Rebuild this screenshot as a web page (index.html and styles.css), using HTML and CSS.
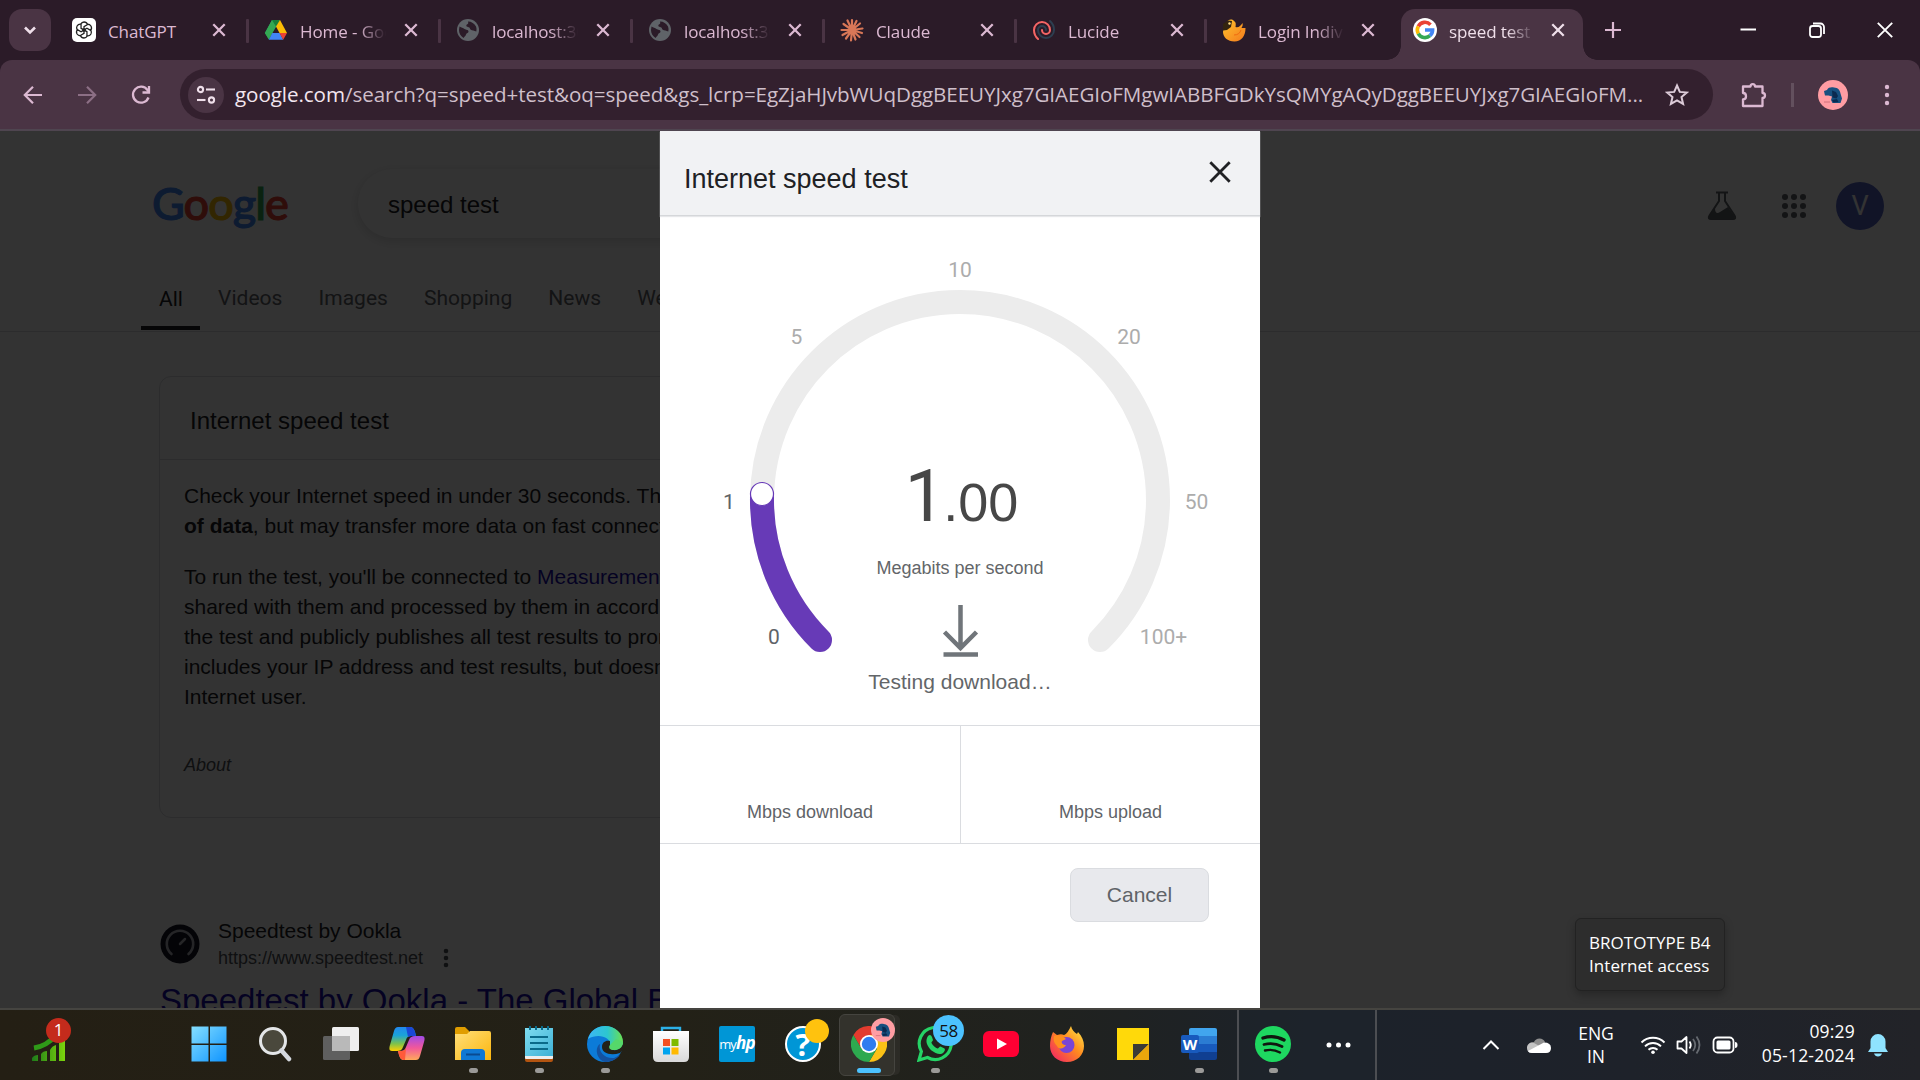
FILE: index.html
```html
<!DOCTYPE html>
<html lang="en">
<head>
<meta charset="utf-8">
<title>speed test - Google Search</title>
<link rel="stylesheet" href="styles.css">
</head>
<body>
<svg width="0" height="0" class="defs">
  <defs>
    <symbol id="x" viewBox="0 0 14 14"><path d="M2 2l10 10M12 2L2 12" stroke="currentColor" stroke-width="2" fill="none"/></symbol>
    <symbol id="globe" viewBox="0 0 24 24"><circle cx="12" cy="12" r="11" fill="#5f6368"/><path d="M3.500 8.500c2 1.500 3.500 1 5 2.500 1.500 1 4 .5 4 2.500 0 1.500-2 1.500-2.500 3-.3 1.500-1.500 2-2.500 3.500C4.500 18 3 15 3 12zM12 3.500c3.500 0 6.500 2 8 5 .8 2 .5 3.500.3 5l-3-1c-2 0-3.500-1-3.500-2.500 0-1.200-3.500-.5-3.500-2.500 0-1.500 2-1 2-2.500z" fill="#2b1b28"/></symbol>
    <symbol id="dog" viewBox="0 0 30 30"><circle cx="15" cy="15" r="15" fill="#ff9da3"/><path d="M6 11l3-1c1-2.500 4-3 7-2.500 4 .3 6 2.500 6.500 6l1.500 5-1.500 4.500h-8l-1.500-3 1-3.500-3.500-1H7l-.5-2z" fill="#17507f"/><path d="M14 10.500l4 1.500 2 4-1.500 2.500-4-1zM14 20l5-1 1.500 3-5 .5z" fill="#0b2a50"/><path d="M6 22h6" stroke="#d0707b"/></symbol>
    <linearGradient id="gWin" x1="0" y1="0" x2="1" y2="1"><stop offset="0" stop-color="#85dfff"/><stop offset="1" stop-color="#0f94ff"/></linearGradient>
    <linearGradient id="gFold" x1="0" y1="0" x2="1" y2="1"><stop offset="0" stop-color="#ffdf7a"/><stop offset="1" stop-color="#fcb60d"/></linearGradient>
    <linearGradient id="gNote" x1="0" y1="0" x2="1" y2="1"><stop offset="0" stop-color="#7fdcf0"/><stop offset="1" stop-color="#3eb1d6"/></linearGradient>
    <linearGradient id="gEdge" x1="0" y1="0" x2="1" y2="0"><stop offset="0" stop-color="#3db7f5"/><stop offset=".55" stop-color="#2cc6d0"/><stop offset="1" stop-color="#6be04e"/></linearGradient>
    <linearGradient id="gStore" x1="0" y1="0" x2="0" y2="1"><stop offset="0" stop-color="#fff"/><stop offset="1" stop-color="#d9d9d9"/></linearGradient>
    <linearGradient id="gBars" x1="0" y1="0" x2="1" y2="0"><stop offset="0" stop-color="#1e7a1a"/><stop offset="1" stop-color="#7bd40c"/></linearGradient>
    <linearGradient id="gCopA" x1="0" y1="0" x2="0" y2="1"><stop offset="0" stop-color="#2288ef"/><stop offset=".35" stop-color="#1aa3d8"/><stop offset=".7" stop-color="#7fc24a"/><stop offset="1" stop-color="#ffd000"/></linearGradient>
    <linearGradient id="gCopB" x1="0" y1="0" x2="0" y2="1"><stop offset="0" stop-color="#a14be8"/><stop offset=".5" stop-color="#f2589a"/><stop offset="1" stop-color="#ffa95a"/></linearGradient>
    <linearGradient id="gFox" x1="1" y1="0" x2="0" y2="1"><stop offset="0" stop-color="#fff14a"/><stop offset=".45" stop-color="#ff8a1f"/><stop offset="1" stop-color="#f0186c"/></linearGradient>
    <linearGradient id="gBird" x1="0" y1="0" x2="1" y2="1"><stop offset="0" stop-color="#ffc32e"/><stop offset="1" stop-color="#f47a1c"/></linearGradient>
  </defs>
</svg>

<div class="screen">
  <header class="tabstrip">
    <button class="tab-search"><svg width="16" height="16" viewBox="0 0 16 16"><path d="M3 5.500l5 5 5-5" stroke="#efdfea" stroke-width="2.600" fill="none"/></svg></button>
    <div class="tabs">
      <div class="tab"><svg class="fav" viewBox="0 0 24 24"><rect width="24" height="24" rx="5" fill="#fff"/><g fill="none" stroke="#222" stroke-width="1.300"><path id="petal" d="M12 4a3.800 3.800 0 0 1 3.600 2.500L12 8.600V14M8.800 6a3.800 3.800 0 0 1 3.200-2"/><use href="#petal" transform="rotate(60 12 12)"/><use href="#petal" transform="rotate(120 12 12)"/><use href="#petal" transform="rotate(180 12 12)"/><use href="#petal" transform="rotate(240 12 12)"/><use href="#petal" transform="rotate(300 12 12)"/></g></svg><span class="tt">ChatGPT</span><svg class="cls"><use href="#x"/></svg></div>
      <div class="tab"><svg class="fav" viewBox="0 0 24 24"><path d="M8 2h8L8.500 14.500 5 21.500.8 15z" fill="#1fa463"/><path d="M8 2l4 6.500L4.800 21.500 1 15z" fill="#34a853"/><path d="M8 2h8l-4 6.500z" fill="#188038"/><path d="M16 2l7 13h-7.500L12 8.500z" fill="#fbbc04"/><path d="M8.300 15h7.400l3.500 6.700H4.800z" fill="#4285f4"/><path d="M15.500 15H23l-3.800 6.700z" fill="#ea4335"/></svg><span class="tt">Home - Goo</span><svg class="cls"><use href="#x"/></svg></div>
      <div class="tab"><svg class="fav"><use href="#globe"/></svg><span class="tt">localhost:30</span><svg class="cls"><use href="#x"/></svg></div>
      <div class="tab"><svg class="fav"><use href="#globe"/></svg><span class="tt">localhost:30</span><svg class="cls"><use href="#x"/></svg></div>
      <div class="tab"><svg class="fav" viewBox="0 0 24 24"><g stroke="#d97757" stroke-width="2.200" stroke-linecap="round"><path d="M12 12V2M12 12l4.500-9M12 12l8-6.500M12 12l10.500-1.500M12 12l10 3M12 12l7.500 7M12 12l3.500 9.500M12 12l-1 10.500M12 12l-6 8.500M12 12l-9.500 5M12 12L1.500 12M12 12L3.500 6M12 12L7.500 2.500"/></g></svg><span class="tt">Claude</span><svg class="cls"><use href="#x"/></svg></div>
      <div class="tab sixth"><svg class="fav" viewBox="0 0 24 24" fill="none" stroke-width="2" stroke-linecap="round"><path d="M14 12a4 4 0 0 0-8 0 8 8 0 1 0 16 0 11.970 11.970 0 0 0-4-8.944" stroke="#2d3f50"/><path d="M10 12a4 4 0 0 0 8 0 8 8 0 1 0-16 0 11.970 11.970 0 0 0 4.063 9" stroke="#f56565"/></svg><span class="tt">Lucide</span><svg class="cls"><use href="#x"/></svg></div>
      <div class="tab last"><svg class="fav" viewBox="0 0 24 24"><path d="M5 4c2-3 5-3 7-1 2 1 2 3 1.500 6 3 1 5-1 7-4 .5 2 0 3.500-1 5h4c0 8-4 13.500-11 13.500S1 19 1 14c0-4 2-7 4-10z" fill="url(#gBird)"/><path d="M1 6l5-3.500 4 .5-1 6-4 3-4 .5z" fill="#33240f"/><circle cx="7.500" cy="5.500" r="1.200" fill="#ffe08a"/><path d="M12 17c4 0 6-2 7-5" stroke="#f06a10" fill="none"/></svg><span class="tt">Login Indivi</span><svg class="cls"><use href="#x"/></svg></div>
      <div class="tab active"><svg class="fav" viewBox="0 0 24 24"><circle cx="12" cy="12" r="12" fill="#fff"/><g fill="none" stroke-width="3.600"><path d="M5.300 8.300A7.600 7.600 0 0 1 17.500 6.700" stroke="#ea4335"/><path d="M5.300 15.700a7.600 7.600 0 0 1 0-7.400" stroke="#fbbc04"/><path d="M17 17.700A7.600 7.600 0 0 1 5.300 15.700" stroke="#34a853"/><path d="M12 12h7.600a7.600 7.600 0 0 1-2.600 5.700" stroke="#4285f4"/></g></svg><span class="tt">speed test</span><svg class="cls"><use href="#x"/></svg></div>
    </div>
    <button class="newtab"><svg width="18" height="18" viewBox="0 0 18 18"><path d="M9 1v16M1 9h16" stroke="#dcb9d2" stroke-width="2.200"/></svg></button>
    <div class="winbtns">
      <svg width="16" height="16" viewBox="0 0 16 16"><path d="M.5 7.500H16" stroke="#fff" stroke-width="2"/></svg>
      <svg width="16" height="16" viewBox="0 0 16 16" fill="none" stroke="#fff" stroke-width="1.800"><rect x="1" y="4" width="11" height="11" rx="2.500"/><path d="M4 1.500h7.500a3.500 3.500 0 0 1 3.500 3.500V12"/></svg>
      <svg width="16" height="16" viewBox="0 0 16 16"><path d="M.8.800l14.400 14.400M15.200.8L.8 15.200" stroke="#fff" stroke-width="1.900"/></svg>
    </div>
  </header>

  <nav class="toolbar">
    <div class="navbtns">
      <svg width="20" height="20" viewBox="0 0 20 20" fill="none" stroke="#dcb9d2" stroke-width="2.200"><path d="M19 10H2.500M10 1.800L1.800 10l8.200 8.200"/></svg>
      <svg width="20" height="20" viewBox="0 0 20 20" fill="none" stroke="#8c6f85" stroke-width="2.200"><path d="M1 10h16.500M10 1.800l8.200 8.200-8.200 8.200"/></svg>
      <svg width="20" height="20" viewBox="0 0 20 20" fill="none" stroke="#dcb9d2" stroke-width="2.300"><path d="M17.500 12.500A8 8 0 1 1 16.500 5l1.500 2"/><path d="M18 1v6.500h-6.500"/></svg>
    </div>
    <div class="omnibox">
      <span class="siteinfo"><svg width="20" height="20" viewBox="0 0 20 20" fill="none" stroke="#efdfea" stroke-width="2.100"><circle cx="4.500" cy="4.500" r="2.600"/><path d="M10 4.500h9"/><circle cx="15.500" cy="15" r="2.600"/><path d="M1 15h8.500"/></svg></span>
      <span class="url"><b>google.com</b>/search?q=speed+test&amp;oq=speed&amp;gs_lcrp=EgZjaHJvbWUqDggBEEUYJxg7GIAEGIoFMgwIABBFGDkYsQMYgAQyDggBEEUYJxg7GIAEGIoFM...</span>
      <svg class="star" width="24" height="24" viewBox="0 0 24 24" fill="none" stroke="#dccbd8" stroke-width="2"><path d="M12 2.500l2.800 6.400 7 .6-5.300 4.600 1.600 6.800L12 17.300l-6.100 3.600 1.600-6.800L2.200 9.500l7-.6z"/></svg>
    </div>
    <div class="tools">
      <svg class="puz" width="26" height="26" viewBox="0 0 26 26" fill="none" stroke="#dcb9d2" stroke-width="2.300" stroke-linejoin="round"><path d="M2 4.500h7.500c0-3.300 4.500-3.300 4.500 0h7.500v6.500c3.300 0 3.300 5 0 5v8H2v-6.500c4 0 4-6.500 0-6.500z"/></svg>
      <i class="tsep"></i>
      <svg class="ava" width="30" height="30"><use href="#dog"/></svg>
      <svg width="6" height="22" viewBox="0 0 6 22" fill="#dcb9d2"><circle cx="3" cy="3" r="2.200"/><circle cx="3" cy="11" r="2.200"/><circle cx="3" cy="19" r="2.200"/></svg>
    </div>
  </nav>

  <main class="page">
    <div class="ghead">
      <div class="logo"><span class="b">G</span><span class="r">o</span><span class="y">o</span><span class="b">g</span><span class="g">l</span><span class="r">e</span></div>
      <div class="searchbox">speed test</div>
      <div class="gright">
        <svg width="30" height="30" viewBox="0 0 30 30"><path d="M9 1.500h12M12 2v8L2.500 24.500C1 27 2 28 4 28h22c2 0 3-1 1.500-3.500L18 10V2" fill="none" stroke="#5f6368" stroke-width="2"/><path d="M3 24l5-7c0 5 2 6 5 4l8-5 7 10-2 2.500H4L2 27z" fill="#5f6368"/></svg>
        <svg width="24" height="24" viewBox="0 0 24 24" fill="#5f6368"><circle cx="3" cy="3" r="3"/><circle cx="12" cy="3" r="3"/><circle cx="21" cy="3" r="3"/><circle cx="3" cy="12" r="3"/><circle cx="12" cy="12" r="3"/><circle cx="21" cy="12" r="3"/><circle cx="3" cy="21" r="3"/><circle cx="12" cy="21" r="3"/><circle cx="21" cy="21" r="3"/></svg>
        <span class="user">V</span>
      </div>
    </div>
    <div class="gtabs"><span class="on">All</span><span>Videos</span><span>Images</span><span>Shopping</span><span>News</span><span>Web</span></div>
    <section class="card">
      <h2>Internet speed test</h2>
      <div class="cbody">
        <p>Check your Internet speed in under 30 seconds. The<br><b>of data</b>, but may transfer more data on fast connect</p>
        <p>To run the test, you'll be connected to <a>Measurement</a><br>shared with them and processed by them in accord<br>the test and publicly publishes all test results to prom<br>includes your IP address and test results, but doesn't<br>Internet user.</p>
        <p class="about">About</p>
      </div>
    </section>
    <section class="result">
      <div class="src">
        <svg width="40" height="40" viewBox="0 0 40 40"><circle cx="20" cy="20" r="19.500" fill="#141526"/><path d="M11.500 30a13.200 13.200 0 1 1 17 0" fill="none" stroke="#b9b9c0" stroke-width="2.600" stroke-linecap="round"/><path d="M20 20l5-5" stroke="#b9b9c0" stroke-width="2.500" stroke-linecap="round"/></svg>
        <div><div class="sname">Speedtest by Ookla</div><div class="surl">https://www.speedtest.net<svg width="6" height="20" viewBox="0 0 6 20" fill="#4d5156"><circle cx="3" cy="3" r="2.300"/><circle cx="3" cy="10" r="2.300"/><circle cx="3" cy="17" r="2.300"/></svg></div></div>
      </div>
      <h3>Speedtest by Ookla - The Global B</h3>
    </section>

    <div class="scrim">
      <div class="modal">
        <div class="mhead"><span>Internet speed test</span><svg width="24" height="24" viewBox="0 0 24 24"><path d="M2.300 2.300l19.400 19.400M21.700 2.300L2.300 21.700" stroke="#202124" stroke-width="2.800"/></svg></div>
        <svg class="gauge" width="600" height="510" viewBox="660 216 600 510">
          <g fill="none" stroke-width="24" stroke-linecap="round">
            <path d="M820 640A198 198 0 1 1 1100 640" stroke="#ececec"/>
            <path d="M820 640A198 198 0 0 1 762 497" stroke="#673ab7" />
          </g>
          <circle cx="762" cy="494" r="11.500" fill="#fff" stroke="#673ab7" stroke-width="1.200"/>
          <g class="ticks"><text x="960" y="277">10</text><text x="796.500" y="344">5</text><text x="1129" y="344">20</text><text x="1196.500" y="509">50</text><text x="1163.500" y="644">100+</text><text class="lit" x="729" y="509">1</text><text class="lit" x="774" y="644">0</text></g>
          <text class="num" x="960" y="521"><tspan class="int" dx="1.500">1</tspan><tspan dx="-2">.00</tspan></text>
          <text class="unit" x="960" y="574">Megabits per second</text>
          <g fill="none" stroke="#70757a" stroke-width="4.500"><path d="M960.500 605v42M944.500 632l16 16 16-16M943.500 654.500h34.500"/></g>
          <text class="status" x="960" y="689">Testing download…</text>
        </svg>
        <div class="totals"><div>Mbps download</div><div>Mbps upload</div></div>
        <div class="mfoot"><button>Cancel</button></div>
      </div>
    </div>
  </main>

  <div class="tooltip">BROTOTYPE B4<br>Internet access</div>

  <footer class="taskbar">
    <div class="widget"><svg width="40" height="48" viewBox="0 0 40 48"><path d="M3 33q13-2 22-13" stroke="#2f9a18" stroke-width="5" fill="none"/><path d="M1 46v-3q2-3 6-3v6zM10 46v-7q2-3 6-3v10zM19 46V35q2-4 6-5v16zM28 46V28q2-4 6-5v23z" fill="url(#gBars)"/></svg><span class="badge red">1</span></div>
    <div class="apps">
      <div class="app"><svg viewBox="0 0 36 36"><path d="M.5.500h17v17H.5zM19 .5h16.500v17H19zM.5 19h17v16.500H.5zM19 19h16.500v16.500H19z" fill="url(#gWin)"/></svg></div>
      <div class="app"><svg viewBox="0 0 36 36"><circle cx="16" cy="15" r="12.500" fill="#4a483c" stroke="#e4e6e8" stroke-width="3"/><path d="M24.500 24.500l7.500 8.500" stroke="#d4d8de" stroke-width="4.500" stroke-linecap="round"/></svg></div>
      <div class="app"><svg viewBox="0 0 36 36"><rect x="0" y="10" width="27" height="24" rx="1.500" fill="#5f5f5f"/><rect x="9" y="1" width="27" height="24" rx="1.500" fill="#efefef"/><path d="M9 10h18v15H9z" fill="#b9b9b9"/></svg></div>
      <div class="app"><svg viewBox="0 0 36 36"><path d="M9 1h12c3 0 4 2 5 5l1 4h-5c-3 0-4 1-5 4l-3 7c-1 3-3 4-6 4H3c-3 0-3-3-2-6L5 5c1-3 2-4 4-4z" fill="url(#gCopA)"/><path d="M17 1h4c3 0 4 2 5 5l1 4h-5l-3 1z" fill="#1b48d6"/><path d="M27 34H15c-3 0-4-2-5-5l-1-4h2c3 0 5-1 6-4l3-7c1-3 3-4 6-4h7c3 0 3 3 2 6l-4 14c-1 3-2 4-4 4z" fill="url(#gCopB)"/><path d="M9 25h3c3 0 4-1 5-3l-1 12c-4 0-5-2-6-5z" fill="#ff5a3a"/></svg></div>
      <div class="app run"><svg viewBox="0 0 36 36"><path d="M0 3q0-2 2-2h8l4 4v5H0z" fill="#e09d00"/><path d="M0 8h12l3-3h19q2 0 2 2v27H0z" fill="url(#gFold)"/><path d="M6 34V27q0-4 4-4h16q4 0 4 4v7z" fill="#0f78d4"/><path d="M11 28.500h14" stroke="#0a4a90" stroke-width="2"/></svg></div>
      <div class="app run"><svg viewBox="0 0 36 36"><rect x="4" y="27" width="28" height="9" rx="2" fill="#b35410"/><rect x="4" y="3" width="28" height="30" rx="1" fill="#eee"/><path d="M4 2h28v28H4z" fill="url(#gNote)"/><path d="M9 0v4M15 0v4M21 0v4M27 0v4M9 11h18M9 17h18M9 23h18" stroke="#0a6a8a" stroke-width="2"/></svg></div>
      <div class="app run"><svg viewBox="0 0 36 36"><circle cx="18" cy="18" r="18" fill="#0c7bd8"/><path d="M1 13C3 5 10 0 18 0c10 0 18 7 18 16 0 6-4 8-9 8-5 0-6-2-4-5 1-8-12-12-22-6z" fill="url(#gEdge)"/><path d="M13 18c-2 8 5 15 14 14l6-3c-4 5-10 7-15 7-8-2-11-14-5-18z" fill="#1452a0"/><path d="M23 15c-4-1-8 1-8 6 0 6 8 9 18 6l3-3v-6l-3 4c-4 4-12 2-10-3z" fill="#232219"/><path d="M23 19c-2 3 0 5 4 5s9-2 9-8l-7-3z" fill="#55d86a"/></svg></div>
      <div class="app"><svg viewBox="0 0 36 36"><path d="M9 7V2h18v5" fill="none" stroke="#2cb1e8" stroke-width="2.400"/><path d="M0 5h36v26q0 5-5 5H5q-5 0-5-5z" fill="url(#gStore)"/><path fill="#f25022" d="M10 13h7v7h-7z"/><path fill="#7fba00" d="M18.500 13h7v7h-7z"/><path fill="#00a4ef" d="M10 21.500h7v7h-7z"/><path fill="#ffb900" d="M18.500 21.500h7v7h-7z"/></svg></div>
      <div class="app"><span class="hp">my<b>hp</b></span></div>
      <div class="app"><span class="help">?</span><span class="badge amber"></span></div>
      <div class="app cur"><svg viewBox="0 0 36 36"><path d="M2.400 9A18 18 0 0 1 33.600 9H18l-8 13z" fill="#e33b2e"/><path d="M18 9h15.600A18 18 0 0 1 18 36l8-13.500z" fill="#fbc116"/><path d="M2.400 9l8 13.500L26 22.500 18 36A18 18 0 0 1 2.400 9z" fill="#2da94f"/><circle cx="18" cy="18" r="9" fill="#fff"/><circle cx="18" cy="18" r="7.200" fill="#2f7cf0"/></svg><svg class="mini"><use href="#dog"/></svg></div>
      <div class="app run"><svg viewBox="0 0 36 36"><path d="M2 34l2.400-8.500A16 16 0 1 1 10.500 31.500z" fill="none" stroke="#25d366" stroke-width="3.200"/><path d="M11 10c2-2 3-1 4 1l1 3c0 1-2 2-1.500 3 1.500 3 4 4.500 6 5.500 1 0 2-2 3-2l4 2c1 1 0 3-1 4-3 3-8 1-12-2-4-4-7-9-3.500-14.500z" fill="#25d366"/></svg><span class="badge sky">58</span></div>
      <div class="app"><svg viewBox="0 0 36 36"><rect y="5" width="36" height="26" rx="6" fill="#ff0033"/><path d="M14 12.500l10 5.500-10 5.500z" fill="#fff"/></svg></div>
      <div class="app"><svg viewBox="0 0 36 36"><path d="M4 6l4 3c3-1 5-1 7 0 3-1 5-5 7-9 1 4 3 6 6 8l1-2c4 4 6 9 6 14 0 9-7 16-17 16S1 29 1 20C1 15 2 10 4 6z" fill="url(#gFox)"/><circle cx="17.500" cy="19" r="8" fill="#7a45d6"/><path d="M5 10c4-2 9 0 12 3l-4 2c-1 2 1 4 4 4-2 4-7 5-9 1-3-3-4-6-3-10z" fill="#ff8f1f"/></svg></div>
      <div class="app"><svg viewBox="0 0 36 36"><path d="M2 2h32v32H2z" fill="#ffd90a"/><path d="M18 34V18h16z" fill="#3b3b36"/><path d="M18 34l16-16v16z" fill="#eba70c"/></svg></div>
      <div class="app run"><svg viewBox="0 0 36 36"><path d="M8 4q0-2 2-2h24q2 0 2 2v6H8z" fill="#41a5ee"/><path d="M8 10h28v8H8z" fill="#2b7cd3"/><path d="M8 18h28v8H8z" fill="#185abd"/><path d="M8 26h28v6q0 2-2 2H10q-2 0-2-2z" fill="#103f91"/><rect y="9" width="18" height="18" rx="2" fill="#185abd"/><text x="9" y="23.500" class="w">W</text></svg></div>
    </div>
    <div class="pinned">
      <div class="app run"><svg viewBox="0 0 36 36"><circle cx="18" cy="18" r="18" fill="#1ed760"/><g fill="none" stroke="#10160f" stroke-linecap="round"><path d="M8 12q11-3.500 21 2" stroke-width="3.400"/><path d="M9 18.500q9.500-2.500 18 2" stroke-width="2.800"/><path d="M10 24.500q8-2 15 2" stroke-width="2.400"/></g></svg></div>
      <svg width="26" height="6" viewBox="0 0 26 6" fill="#fff"><circle cx="3" cy="3" r="2.500"/><circle cx="12.500" cy="3" r="2.500"/><circle cx="22" cy="3" r="2.500"/></svg>
    </div>
    <div class="tray">
      <svg width="18" height="12" viewBox="0 0 18 12"><path d="M1.500 10L9 2.500l7.500 7.500" stroke="#fff" stroke-width="2" fill="none"/></svg>
      <svg class="cloud" width="26" height="18" viewBox="0 0 26 18"><path d="M8 6a6 6 0 0 1 11 0l-5 6H3a5 5 0 0 1 5-6z" fill="#8f8f8f"/><path d="M1 12a5 5 0 0 1 7-5l9 5-9 5H6q-5 0-5-5z" fill="#c4c4c4"/><path d="M2 15l16-8.500q7 0 7 5.500 0 5-5 5H6q-3 0-4-2z" fill="#fff"/></svg>
      <span class="lang">ENG<br>IN</span>
      <svg class="wifi" width="26" height="20" viewBox="0 0 26 20" fill="none" stroke="#fff" stroke-width="1.900"><path d="M1.500 7.500a16.300 16.300 0 0 1 23 0M5 11.300a11.300 11.300 0 0 1 16 0M8.500 14.800a6.400 6.400 0 0 1 9 0"/><circle cx="13" cy="17.300" r="1.800" fill="#fff" stroke="none"/></svg>
      <svg class="vol" width="26" height="20" viewBox="0 0 26 20" fill="none" stroke="#fff" stroke-width="1.800"><path d="M1.500 6.500h4L10.500 2v16l-5-4.500h-4z" stroke-linejoin="round"/><path d="M13.500 6.500q2.500 3.500 0 7"/><path d="M17 4q4.500 6 0 12M20.500 1.500q6 8.500 0 17" stroke="#666a70"/></svg>
      <svg class="bat" width="26" height="18" viewBox="0 0 26 18"><rect x="1.500" y="1.500" width="20" height="15" rx="4" fill="none" stroke="#fff" stroke-width="1.800"/><rect x="4.500" y="4.500" width="14" height="9" rx="1.500" fill="#fff"/><path d="M23 6q2.500 0 2.500 3T23 12z" fill="#fff"/></svg>
      <span class="clock">09:29<br>05-12-2024</span>
      <svg class="bell" width="20" height="24" viewBox="0 0 20 24" fill="#8fe3ff"><path d="M2.500 8.500a7.500 7.500 0 0 1 15 0V15l2.500 4H0l2.500-4zM6 20.500h8q-1 3-4 3t-4-3z"/></svg>
    </div>
  </footer>
</div>
</body>
</html>
```
FILE: styles.css
```css
* { box-sizing: border-box; }
body { margin: 0; background: #333; font-family: "Liberation Sans", Arial, sans-serif; overflow: hidden; }
svg { display: block; flex: none; }
.defs { position: absolute; }
button { border: 0; padding: 0; margin: 0; font: inherit; }
h2, h3, p { margin: 0; font-weight: 400; }
.screen { width: 1920px; height: 1080px; display: flex; flex-direction: column; position: relative; overflow: hidden; background: #2b1b28; }

/* tab strip */
.tabstrip { height: 60px; flex: none; display: flex; background: #2b1b28; font-family: "Open Sans", sans-serif; }
.tab-search { width: 42px; height: 42px; margin: 9px 5px 0 9px; border-radius: 13px; background: #4a3444; display: grid; place-items: center; }
.tabs { display: flex; }
.tab { width: 192px; height: 60px; padding: 0 21px 0 16px; display: flex; align-items: center; color: #dcb9d2; font-size: 17px; position: relative; }
.tab::after { content: ""; position: absolute; right: -1px; top: 19px; width: 3px; height: 24px; background: #4a3444; border-radius: 1px; }
.tab.sixth { width: 190px; }
.tab.last { width: 191px; }
.tab.last::after { display: none; }
.fav { width: 24px; height: 24px; margin-right: 12px; }
.tt { width: 87px; overflow: hidden; white-space: nowrap; letter-spacing: -.1px; line-height: 26px; padding-top: 3px; -webkit-mask: linear-gradient(90deg, #000 58px, transparent 86px); mask: linear-gradient(90deg, #000 58px, transparent 86px); }
.tab:first-child .tt { -webkit-mask: none; mask: none; }
.cls { width: 16px; height: 16px; margin-left: auto; }
.tab.active { color: #efdfea; width: 186px; padding: 0 17px 0 16px; isolation: isolate; }
.tab.active::before { content: ""; position: absolute; z-index: -1; left: 4px; right: 0; top: 9px; bottom: 0; background: #4a3444; border-radius: 14px 14px 0 0; }
.tab.active::after { z-index: -1; left: -10px; right: -14px; top: 46px; width: auto; height: 14px; border-radius: 0; background: radial-gradient(circle at 0 0, transparent 13.500px, #4a3444 14px) left / 14px 14px no-repeat, radial-gradient(circle at 100% 0, transparent 13.500px, #4a3444 14px) right / 14px 14px no-repeat; }
.newtab { background: none; margin-left: 21px; width: 18px; height: 60px; display: grid; place-items: center; }
.winbtns { margin-left: auto; display: flex; gap: 52.500px; padding: 22px 27px 0 0; }

/* toolbar */
.toolbar { height: 71px; flex: none; background: #4a3444; border-bottom: 2px solid #4f4550; border-radius: 12px 12px 0 0; display: flex; align-items: center; }
.navbtns { display: flex; gap: 34px; padding-left: 23px; width: 180px; }
.omnibox { width: 1533px; height: 51px; border-radius: 26px; background: #33202e; display: flex; align-items: center; padding-left: 8px; }
.siteinfo { width: 36px; height: 36px; border-radius: 50%; background: #4a3444; display: grid; place-items: center; margin-right: 11px; }
.url { font-family: "Open Sans", sans-serif; font-size: 20.600px; color: #cfbfca; white-space: nowrap; width: 1440px; letter-spacing: -.07px; padding-bottom: 2px; }
.url b { font-weight: 400; color: #f3e6ef; }
.star { margin-left: -10px; }
.tools { display: flex; align-items: center; padding-left: 28px; }
.tsep { width: 3px; height: 24px; background: #63505e; margin: 0 24px 0 24px; }
.ava { margin-right: 36px; }

/* search page */
.page { height: 877px; flex: none; position: relative; overflow: hidden; background: #fff; color: #202124; }
.ghead { display: flex; height: 144px; padding: 38px 36px 0 152px; }
.logo { width: 206px; font: 500 45px/1 Lato, sans-serif; padding-top: 12px; letter-spacing: -1px; white-space: nowrap; -webkit-text-stroke: 1px; }
.b { color: #4285f4; } .r { color: #ea4335; } .y { color: #fbbc05; } .g { color: #34a853; }
.searchbox { width: 870px; height: 69px; border-radius: 35px; box-shadow: 0 3px 12px rgba(64,60,67,.2); padding-left: 30px; font-size: 24px; line-height: 72px; }
.gright { margin-left: auto; height: 48px; margin-top: 13px; display: flex; align-items: center; }
.gright svg:first-child { margin-right: 45px; }
.user { width: 48px; height: 48px; border-radius: 50%; background: #5564c4; color: #fff; font: 27px/48px Roboto, sans-serif; text-align: center; margin-left: 30px; }
.gtabs { display: flex; height: 57px; border-bottom: 1px solid #dadce0; padding-left: 141px; font: 21px/46px Roboto, sans-serif; color: #5f6368; }
.gtabs span { height: 55px; padding: 0 18px; letter-spacing: .03px; }
.gtabs .on { color: #202124; border-bottom: 4px solid #202124; line-height: 48px; padding: 0 17px 0 18px; }
.card { margin: 44px 0 0 159px; width: 980px; height: 442px; border: 1px solid #dadce0; border-radius: 12px; }
.card h2 { font-size: 24px; line-height: 27px; padding: 30px 30px 0; height: 83px; border-bottom: 1px solid #dadce0; }
.cbody { padding: 21px 24px; font-size: 21px; line-height: 30px; white-space: nowrap; }
.cbody p { margin-bottom: 21px; }
.cbody a { color: #1a0dab; }
.cbody .about { font-size: 18px; font-style: italic; color: #4d5156; margin-top: 38px; }
.result { padding: 99px 0 0 160px; }
.src { display: flex; align-items: center; gap: 18px; height: 54px; }
.sname { font-size: 21px; line-height: 28px; margin-top: -1px; }
.surl { font-size: 18px; line-height: 26px; color: #4d5156; display: flex; gap: 20px; align-items: center; }
.result h3 { font-size: 33px; line-height: 40px; color: #1a0dab; padding-top: 10px; white-space: nowrap; }

/* dialog */
.scrim { position: absolute; inset: 0; background: rgba(0,0,0,.8); display: flex; justify-content: center; }
.modal { width: 600px; background: #fff; display: flex; flex-direction: column; }
.mhead { height: 85px; flex: none; background: #f1f2f4; border-bottom: 1px solid #d5d7da; box-shadow: 0 1px 1px #e6e7e9; display: flex; justify-content: space-between; padding: 29px 28px 0 24px; font-size: 27px; line-height: 38px; }
.gauge { text-anchor: middle; font-size: 21px; }
.ticks { fill: #acacac; font-family: Roboto, sans-serif; }
.ticks .lit { fill: #5f6368; }
.num { font-size: 54px; fill: #474747; }
.int { font-size: 72px; font-family: Roboto, sans-serif; }
.unit { font-size: 18px; fill: #636669; }
.status { fill: #636669; }
.totals { display: grid; grid-template-columns: 1fr 1fr; height: 119px; border: solid #dadce0; border-width: 1px 0; margin-top: -1px; font-size: 18px; color: #5f6368; text-align: center; padding: 0; }
.totals div { padding-top: 76px; line-height: 20px; }
.totals div + div { border-left: 1px solid #dadce0; }
.mfoot { display: flex; justify-content: flex-end; padding: 24px 51px 0 0; }
.mfoot button { width: 139px; height: 54px; border: 1px solid #dadce0; border-radius: 8px; background: #e8e9ed; color: #5f6368; font-size: 21px; }

/* network tooltip */
.tooltip { position: absolute; left: 1575px; top: 918px; width: 150px; height: 73px; border: 1px solid #222; border-radius: 6px; background: #2d2d2d; box-shadow: 0 4px 8px rgba(0,0,0,.25); color: #fff; font: 17px/23px "Open Sans", sans-serif; padding: 12px 0 0 13px; letter-spacing: .05px; white-space: nowrap; }

/* taskbar */
.taskbar { height: 72px; flex: none; border-top: 2px solid #454440; display: flex; background: linear-gradient(90deg, #241f14, #232117 35%, #20221f 55%, #1c222a 68%, #1e222a 85%, #222328); color: #fff; }
.widget { width: 175px; padding: 5px 0 0 31px; position: relative; }
.apps { display: flex; width: 1062px; padding-left: 1px; }
.app { width: 66px; height: 70px; position: relative; display: flex; justify-content: center; padding-top: 16px; }
.app > svg { width: 36px; height: 36px; }
.run::after { content: ""; position: absolute; left: 28.500px; top: 58px; width: 9px; height: 5px; border-radius: 3px; background: #9b9a98; }
.badge { position: absolute; border-radius: 50%; text-align: center; font-family: "Open Sans", sans-serif; }
.red { left: 46px; top: 8px; width: 25px; height: 25px; background: #c42b1c; font-size: 17px; line-height: 24px; }
.amber { left: 35px; top: 9px; width: 24px; height: 24px; background: #ffc20e; }
.sky { left: 31px; top: 5px; width: 31px; height: 31px; background: #4cc2ff; color: #111; font-size: 17px; line-height: 31px; letter-spacing: -.5px; }
.hp { width: 36px; height: 36px; background: #0096d6; border-radius: 2px; font: 13px/34px "Open Sans", sans-serif; text-align: center; letter-spacing: -.8px; }
.hp b { font-size: 17px; font-style: italic; }
.help { width: 36px; height: 36px; border-radius: 50%; background: #0096d6; border: 2px solid #fff; font: bold 31px/33px "Open Sans", sans-serif; text-align: center; }
.cur::before { content: ""; position: absolute; left: 3px; top: 4px; width: 54px; height: 60px; border-radius: 6px; border: 1px solid #45443f; background: #33322c; box-shadow: 6px 0 0 -1px #2c2b26; }
.cur::after { content: ""; position: absolute; left: 21px; top: 58px; width: 24px; height: 5px; border-radius: 3px; background: #4cc2ff; }
.cur svg { position: relative; }
.app .mini { position: absolute; left: 35px; top: 8px; width: 24px; height: 24px; }
.w { font: bold 15px "Open Sans", sans-serif; fill: #fff; text-anchor: middle; }
.pinned { width: 140px; display: flex; align-items: center; border: solid #4c4e52; border-width: 0 2px; background: rgba(30,36,44,.5); padding-left: 1px; gap: 20px; }
.tray { display: flex; align-items: center; padding-left: 105px; font: 17.500px/23.500px "Open Sans", sans-serif; }
.cloud { margin-left: 26px; }
.lang { width: 40px; text-align: center; margin-left: 24px; }
.wifi { margin-left: 24px; }
.vol { margin-left: 10px; }
.bat { margin-left: 10px; }
.clock { width: 117px; text-align: right; letter-spacing: .2px; padding-bottom: 3px; }
.bell { margin-left: 13px; }
```
